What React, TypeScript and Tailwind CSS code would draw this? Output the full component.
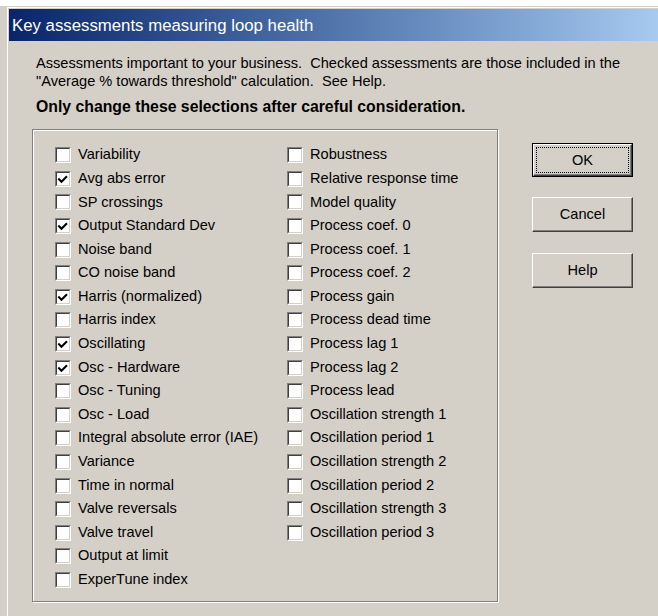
import React from "react";

type Item = { label: string; checked?: boolean };

const leftItems: Item[] = [
  { label: "Variability" },
  { label: "Avg abs error", checked: true },
  { label: "SP crossings" },
  { label: "Output Standard Dev", checked: true },
  { label: "Noise band" },
  { label: "CO noise band" },
  { label: "Harris (normalized)", checked: true },
  { label: "Harris index" },
  { label: "Oscillating", checked: true },
  { label: "Osc - Hardware", checked: true },
  { label: "Osc - Tuning" },
  { label: "Osc - Load" },
  { label: "Integral absolute error (IAE)" },
  { label: "Variance" },
  { label: "Time in normal" },
  { label: "Valve reversals" },
  { label: "Valve travel" },
  { label: "Output at limit" },
  { label: "ExperTune index" },
];

const rightItems: Item[] = [
  { label: "Robustness" },
  { label: "Relative response time" },
  { label: "Model quality" },
  { label: "Process coef. 0" },
  { label: "Process coef. 1" },
  { label: "Process coef. 2" },
  { label: "Process gain" },
  { label: "Process dead time" },
  { label: "Process lag 1" },
  { label: "Process lag 2" },
  { label: "Process lead" },
  { label: "Oscillation strength 1" },
  { label: "Oscillation period 1" },
  { label: "Oscillation strength 2" },
  { label: "Oscillation period 2" },
  { label: "Oscillation strength 3" },
  { label: "Oscillation period 3" },
];

function CheckBox({ checked }: { checked?: boolean }) {
  return (
    <div className="w-[16px] h-[16px] shrink-0 border border-t-[#808080] border-l-[#808080] border-b-white border-r-white">
      <div className="w-full h-full bg-white border border-t-[#404040] border-l-[#404040] border-b-[#d4d0c8] border-r-[#d4d0c8] flex">
        {checked && (
          <svg width="14" height="14" viewBox="0 0 14 14" className="block">
            <path d="M2.4 6.2 L5.2 9.0 L10.8 3.4" stroke="#000" strokeWidth="2.4" fill="none" strokeLinecap="square" />
          </svg>
        )}
      </div>
    </div>
  );
}

function Row({ item }: { item: Item }) {
  return (
    <div className="h-[23.6px] flex items-center">
      <CheckBox checked={item.checked} />
      <span className="ml-[7px] text-[14.6px] whitespace-pre">{item.label}</span>
    </div>
  );
}

function Button({ label, isDefault }: { label: string; isDefault?: boolean }) {
  if (isDefault) {
    return (
      <div className="h-[34px] w-[101px] border border-black flex">
        <div className="flex-1 flex border border-t-white border-l-white border-b-[#404040] border-r-[#404040] shadow-[inset_-1px_-1px_0_#808080]">
          <div className="flex-1 m-[2px] pt-px border border-dotted border-black flex items-center justify-center text-[14.6px]">
            {label}
          </div>
        </div>
      </div>
    );
  }
  return (
    <div className="h-[35px] w-[101px] flex items-center justify-center border border-t-white border-l-white border-b-[#404040] border-r-[#404040] shadow-[inset_-1px_-1px_0_#808080] text-[14.6px]">
      {label}
    </div>
  );
}

export default function App() {
  return (
    <div className="w-[658px] h-[616px] bg-[#d4d0c8] flex flex-col overflow-hidden text-black font-['Liberation_Sans',Arial,sans-serif]">
      <div className="h-[6px] bg-white shrink-0" />
      <div className="flex-1 flex pt-px min-h-0">
        <div className="w-[7px] shrink-0" />
        <div className="flex-1 flex flex-col border-l border-t border-white pl-px pt-px min-w-0">
          {/* caption bar */}
          <div className="h-[32px] shrink-0 flex items-center pl-[3px] pt-[2px] bg-gradient-to-r from-[#0a246a] to-[#a6caf0]">
            <span className="text-white text-[16.8px] whitespace-nowrap">
              Key assessments measuring loop health
            </span>
          </div>

          <div className="flex flex-col pl-[23px]">
            <p className="mt-[14.4px] ml-[4px] text-[14.6px] leading-[17.5px] whitespace-pre">
              {"Assessments important to your business.  Checked assessments are those included in the\n\"Average % towards threshold\" calculation.  See Help."}
            </p>
            <p className="mt-[6.6px] ml-[4px] text-[15.8px] leading-[20px] font-bold whitespace-nowrap">
              Only change these selections after careful consideration.
            </p>

            <div className="mt-[12px] flex items-start">
              {/* etched group frame */}
              <div className="w-[466px] h-[473px] border border-[#808080] shadow-[inset_1px_1px_0_#fff,1px_1px_0_#fff] pl-[22px] pt-[13.5px] flex">
                <div className="w-[232px] flex flex-col">
                  {leftItems.map((it) => (
                    <Row key={it.label} item={it} />
                  ))}
                </div>
                <div className="flex flex-col">
                  {rightItems.map((it) => (
                    <Row key={it.label} item={it} />
                  ))}
                </div>
              </div>

              <div className="ml-[34px] mt-[14px] flex flex-col gap-[20.5px]">
                <Button label="OK" isDefault />
                <Button label="Cancel" />
                <Button label="Help" />
              </div>
            </div>
          </div>
        </div>
      </div>
    </div>
  );
}
